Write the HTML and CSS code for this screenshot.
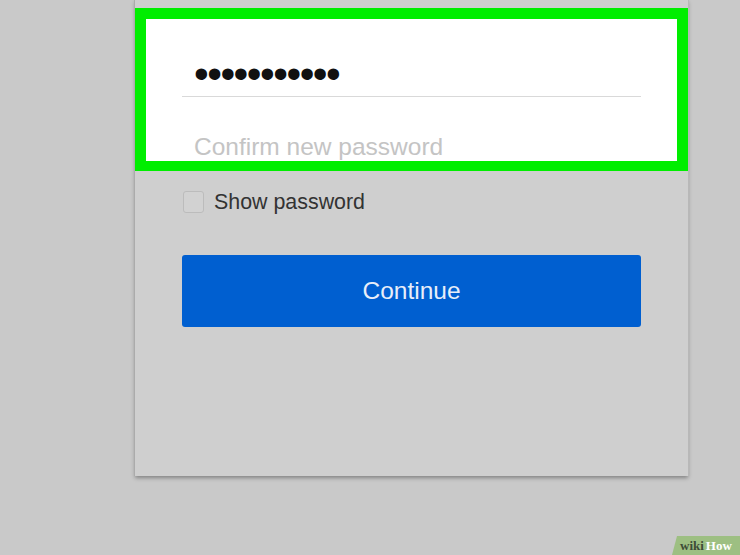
FILE: index.html
```html
<!DOCTYPE html>
<html>
<head>
<meta charset="utf-8">
<link rel="stylesheet" href="styles.css">
</head>
<body>
<div class="card">
  <div class="highlight">
    <div class="field field-filled"><span class="dots">•••••••••••</span></div>
    <div class="field field-empty"><span class="placeholder">Confirm new password</span></div>
  </div>
  <div class="body">
    <label class="show-row"><span class="checkbox"></span><span class="show-label">Show password</span></label>
    <div class="button">Continue</div>
  </div>
</div>
<div class="wh-logo"><span class="wh-wiki">wiki</span><span class="wh-how">How</span></div>
</body>
</html>
```
FILE: styles.css
```css
html, body {
  margin: 0;
  padding: 0;
}
body {
  width: 740px;
  height: 555px;
  overflow: hidden;
  background: #c9c9c9;
  font-family: "Liberation Sans", Arial, sans-serif;
  position: relative;
}
.card {
  margin-left: 135px;
  width: 553px;
  height: 476px;
  box-sizing: border-box;
  padding-top: 8px;
  background: #cfcfcf;
  box-shadow: -1px 0 0 #ababab, 1px 0 0 #b8b8b8, 0 2px 4px rgba(0, 0, 0, 0.35);
}
.highlight {
  border: 11px solid #00ee00;
  border-bottom-width: 10px;
  background: #ffffff;
  height: 142px;
  overflow: hidden;
  padding: 0 36px 0 36px;
}
.field {
  box-sizing: border-box;
}
.field-filled {
  height: 78px;
  border-bottom: 1px solid #d9d9d9;
  padding-left: 12px;
  padding-top: 35px;
}
.dots {
  display: block;
  font-size: 42px;
  line-height: 40px;
  letter-spacing: -1.5px;
  color: #111111;
}
.field-empty {
  padding-left: 12px;
  padding-top: 35px;
}
.placeholder {
  display: block;
  font-size: 24.5px;
  line-height: 30px;
  color: #c4c4c4;
}
.body {
  padding: 20px 47px 0 47px;
}
.show-row {
  display: flex;
  align-items: center;
  gap: 10px;
  height: 22px;
  padding-left: 1px;
}
.checkbox {
  width: 19px;
  height: 20px;
  border: 1px solid #bcbcbc;
  border-radius: 3px;
  background: #d2d2d2;
}
.show-label {
  font-size: 21.4px;
  color: #333333;
  line-height: 22px;
}
.button {
  margin-top: 42px;
  height: 72px;
  width: 459px;
  background: #005fd0;
  border-radius: 3px;
  color: #e8eef9;
  font-size: 24.5px;
  display: flex;
  align-items: center;
  justify-content: center;
}
.wh-logo {
  position: absolute;
  right: 0;
  bottom: 0;
  width: 68px;
  height: 19px;
  background: #9dbf82;
  clip-path: polygon(5px 0, 100% 0, 100% 100%, 0 100%);
  display: flex;
  align-items: center;
  padding-left: 8px;
  box-sizing: border-box;
  font-family: "Liberation Serif", "Times New Roman", serif;
  font-weight: bold;
  font-size: 13px;
}
.wh-wiki {
  color: #3d4b36;
}
.wh-how {
  color: #ffffff;
  margin-left: 2px;
}
```
